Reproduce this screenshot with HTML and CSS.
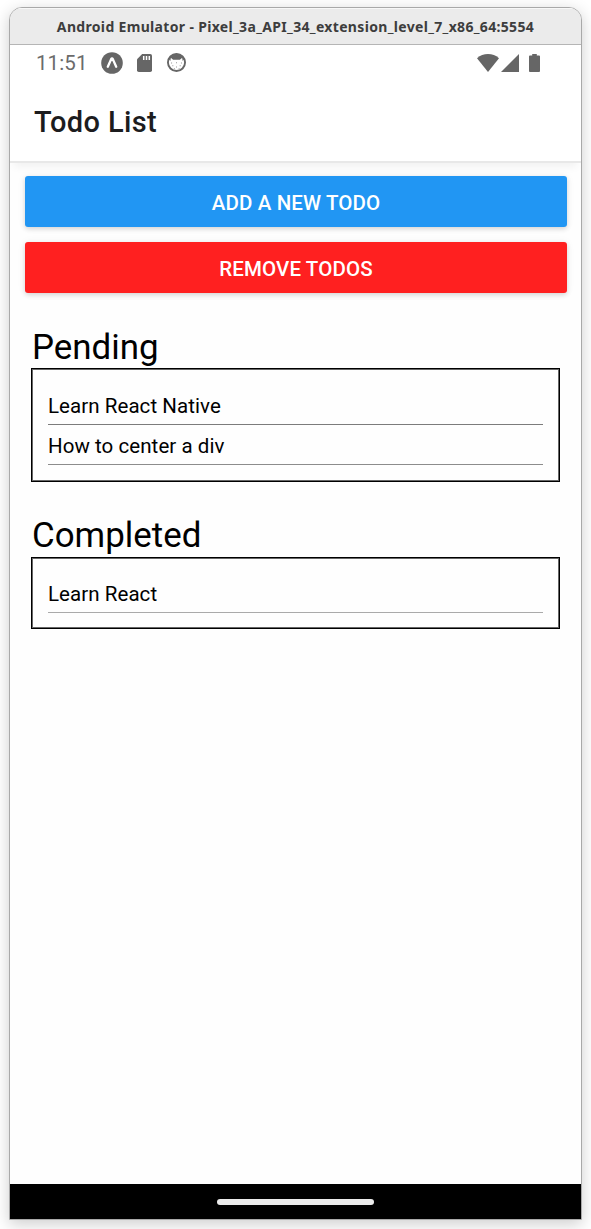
FILE: index.html
```html
<!DOCTYPE html>
<html lang="en">
<head>
<meta charset="utf-8">
<title>Todo List</title>
<link rel="stylesheet" href="styles.css">
</head>
<body>
<div class="window">
  <div class="titlebar"><span class="titlebar-text">Android Emulator - Pixel_3a_API_34_extension_level_7_x86_64:5554</span></div>
  <div class="statusbar">
    <span class="clock">11:51</span>
    <svg class="icon-expo" width="22" height="22" viewBox="0 0 22 22"><circle cx="11" cy="11" r="10.8" fill="#666"/><path d="M6.8 14.8 10.1 7.2Q11 5.7 11.9 7.2L15.2 14.8" fill="none" stroke="#fff" stroke-width="2.3" stroke-linecap="round"/></svg>
    <svg class="icon-sd" width="15" height="18" viewBox="0 0 15 18"><path d="M5.2 0H13.2Q15 0 15 1.8V16.2Q15 18 13.2 18H1.8Q0 18 0 16.2V5.2Z" fill="#666"/><path d="M6.7 2v4M9.5 2v4M12.3 2v4" stroke="#fff" stroke-width="1.5"/></svg>
    <svg class="icon-cat" width="19" height="19" viewBox="0 0 18 18"><circle cx="9" cy="9" r="8.1" fill="#fff" stroke="#666" stroke-width="1.8"/><path d="M1.4 5.5Q4 .8 9 .8t7.6 4.7L14.8 7.6 14.4 4.4 12.2 6.4H5.8L3.6 4.4 3.2 7.6Z" fill="#666"/><path d="M3.8 9.5h1M5 12h1M8.5 9.3h1M12 12h1M13.2 9.5h1M8.5 13.2h1M6.5 15h1M11 15h1" stroke="#999" stroke-width="1"/></svg>
    <span class="spacer"></span>
    <svg class="icon-wifi" width="22" height="18" viewBox="0 0 22 18"><path d="M0 4.2Q4.8 0 11 0t11 4.2L11 18Z" fill="#666"/></svg>
    <svg class="icon-signal" width="18" height="18" viewBox="0 0 18 18"><path d="M18 0V18H0Z" fill="#666"/></svg>
    <svg class="icon-battery" width="11" height="18" viewBox="0 0 12 19" preserveAspectRatio="none"><path d="M3.5 0h5v1.7H11Q12 1.7 12 2.7V18Q12 19 11 19H1Q0 19 0 18V2.7Q0 1.7 1 1.7H3.5Z" fill="#666"/></svg>
  </div>
  <header class="header"><h1 class="header-title">Todo List</h1></header>
  <main class="content">
    <div class="actions">
      <button class="btn btn-add"><span>ADD A NEW TODO</span></button>
      <button class="btn btn-remove"><span>REMOVE TODOS</span></button>
    </div>
    <section class="section">
      <h2 class="section-title">Pending</h2>
      <ul class="todos">
        <li class="todo todo-strong">Learn React Native</li>
        <li class="todo">How to center a div</li>
      </ul>
    </section>
    <section class="section section-completed">
      <h2 class="section-title">Completed</h2>
      <ul class="todos todos-completed">
        <li class="todo todo-light">Learn React</li>
      </ul>
    </section>
  </main>
  <footer class="navbar"><div class="handle"></div></footer>
</div>
</body>
</html>
```
FILE: styles.css
```css
* { box-sizing: border-box; }
body {
  margin: 0;
  height: 1229px;
  padding: 7px 9px 9px;
  background: #fff;
  font-family: Roboto, sans-serif;
  overflow: hidden;
}
.window {
  width: 573px;
  height: 1213px;
  display: flex;
  flex-direction: column;
  background: #fefefe;
  border: 1px solid #a9a9a9;
  border-radius: 13px 13px 0 0;
  overflow: hidden;
  box-shadow: 0 4px 16px rgba(0, 0, 0, 0.2);
}
.titlebar {
  flex: none;
  height: 37px;
  display: flex;
  align-items: center;
  justify-content: center;
  padding-top: 2px;
  background: #ebebeb;
  border-bottom: 1px solid #b5b5b5;
  box-shadow: inset 0 1px #f8f8f8;
  color: #3d3d3d;
  font: 700 14px/20px "Noto Sans", sans-serif;
  letter-spacing: 0.33px;
  white-space: nowrap;
}
.statusbar {
  flex: none;
  height: 37px;
  display: flex;
  align-items: center;
  padding: 0 41px 2px 26px;
  background: #fff;
}
.clock {
  width: 65px;
  color: #6b6b6b;
  font-size: 20.5px;
  line-height: 24px;
  letter-spacing: 0.1px;
}
.icon-sd { margin-left: 14px; }
.icon-cat { margin-left: 15px; }
.spacer { flex: 1; }
.icon-signal { margin-left: 2px; }
.icon-battery { margin-left: 10px; }
.header {
  flex: none;
  height: 81px;
  padding: 23px 24px 0;
  background: #fff;
  border-bottom: 2px solid #e8e8e8;
  box-shadow: 0 8px 8px -4px rgba(0, 0, 0, 0.05);
}
.header-title {
  margin: 0;
  color: #1c1c1e;
  font-size: 29px;
  line-height: 34px;
  font-weight: 500;
  letter-spacing: 0.35px;
}
.content { flex: 1; }
.actions {
  display: flex;
  flex-direction: column;
  gap: 15px;
  padding: 13px 14px 0 15px;
}
.btn {
  height: 51px;
  padding: 2px 0 0;
  border: 0;
  border-radius: 3px;
  color: #fff;
  font: 500 20.5px/24px Roboto, sans-serif;
  letter-spacing: 0.12px;
  box-shadow: 0 2px 5px rgba(0, 0, 0, 0.14), 0 0 10px rgba(0, 0, 0, 0.05);
}
.btn-add { background: #2196f3; }
.btn-remove { background: #ff2020; }
.section { padding: 33px 21px 0; }
.section-title {
  margin: 0;
  padding: 1px 0 0 1px;
  color: #000;
  font-size: 34.9px;
  line-height: 41px;
  font-weight: 400;
}
.section-completed { padding-top: 32px; }
.section-completed .section-title { padding-bottom: 1px; }
.todos {
  margin: 0;
  padding: 16px;
  border: 1px solid #000;
  box-shadow: inset 0 0 0 1px #666;
  list-style: none;
}
.todos-completed { padding: 15px 16px; }
.todo {
  height: 40px;
  padding-top: 9px;
  border-bottom: 1px solid #8c8c8c;
  color: #000;
  font-size: 20.5px;
  line-height: 24px;
  letter-spacing: 0.06px;
}
.todo-strong { border-color: #7c7c7c; }
.todo-light { border-color: #aaa; }
.navbar {
  flex: none;
  height: 35px;
  display: flex;
  align-items: center;
  justify-content: center;
  background: #000;
}
.handle {
  width: 157px;
  height: 6px;
  border-radius: 3px;
  background: #ebebeb;
}
```
